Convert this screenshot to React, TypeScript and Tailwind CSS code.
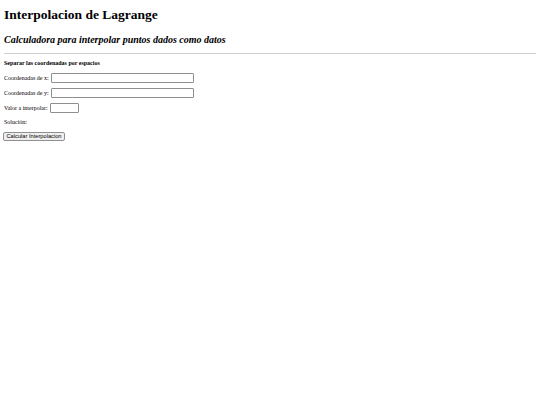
export default function App() {
  return (
    <div className="min-h-screen bg-white px-1 pt-[6px] text-black" style={{ fontFamily: '"Liberation Serif", "Times New Roman", serif' }}>
      <h1 className="text-[13.5px] font-bold leading-[18px]">Interpolacion de Lagrange</h1>
      <h3 className="mt-[9px] text-[10px] font-bold italic leading-[13px]">Calculadora para interpolar puntos dados como datos</h3>
      <div className="mt-[7px] border-t border-[#cfcfcf]" />
      <div className="mt-[5px] flex flex-col text-[6px]">
        <p className="font-bold leading-[8px]">Separar las coordenadas por espacios</p>
        <div className="mt-[6px] flex items-center gap-[2px] leading-[10px]">
          <span>Coordenadas de x:</span>
          <input className="h-[10px] w-[143px] border border-[#8f8f8f] rounded-[1px] bg-white" />
        </div>
        <div className="mt-[5px] flex items-center gap-[2px] leading-[10px]">
          <span>Coordenadas de y:</span>
          <input className="h-[10px] w-[143px] border border-[#8f8f8f] rounded-[1px] bg-white" />
        </div>
        <div className="mt-[5px] flex items-center gap-[2px] leading-[10px]">
          <span>Valor a interpolar:</span>
          <input className="h-[10px] w-[29px] border border-[#8f8f8f] rounded-[1px] bg-white" />
        </div>
        <p className="mt-[5px] leading-[8px]">Solución:</p>
        <div className="mt-[6px] -ml-px">
          <button
            className="h-[9px] rounded-[2px] border border-[#8f8f8f] bg-[#efefef] px-[2.5px] text-[5.7px] leading-[7px]"
            style={{ fontFamily: '"Liberation Sans", Arial, sans-serif' }}
          >
            Calcular Interpolacion
          </button>
        </div>
      </div>
    </div>
  );
}
